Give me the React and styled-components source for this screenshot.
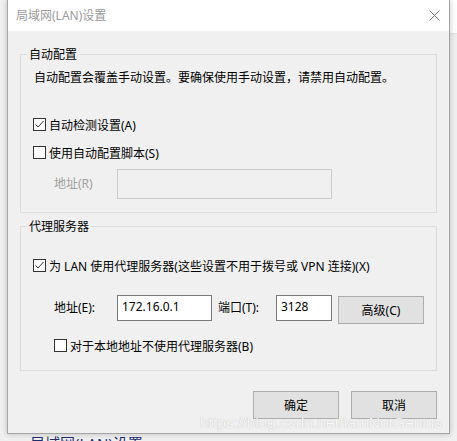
import React from 'react';
import styled, { createGlobalStyle } from 'styled-components';

const GlobalStyle = createGlobalStyle`
  html, body {
    margin: 0;
    padding: 0;
    background: #f0f0f0;
  }
  body {
    font-family: 'Noto Sans', 'Noto Sans CJK SC', sans-serif;
    font-size: 12px;
    color: #000000;
  }
`;

const Page = styled.div`
  position: relative;
  width: 457px;
  height: 441px;
  overflow: hidden;
  padding-left: 7px;
  box-sizing: border-box;
  background: linear-gradient(#ffffff, #ffffff) right top / 8px 33px no-repeat,
    linear-gradient(#e3e3e3, #e3e3e3) right 33px / 8px 1px no-repeat, #f0f0f0;
`;

const Dialog = styled.div`
  width: 443px;
  box-sizing: border-box;
  border: 1px solid #a5a5a5;
  border-top: none;
  background: #f0f0f0;
  box-shadow: 0 0 6px rgba(0, 0, 0, 0.22);
`;

const TitleBar = styled.div`
  height: 31px;
  background: #ffffff;
  display: flex;
  align-items: center;
  justify-content: space-between;
  padding: 0 9px 0 8px;
`;

const Title = styled.div`
  color: #9a9a9a;
  font-size: 12px;
  line-height: 16px;
`;

const Body = styled.div`
  padding: 23px 12px 14px 12px;
  display: flex;
  flex-direction: column;
`;

const Group = styled.div`
  position: relative;
  border: 1px solid #dcdcdc;
  padding: ${(p) => p.$pad};
  margin-bottom: ${(p) => p.$mb || 0}px;
  display: flex;
  flex-direction: column;
`;

const Legend = styled.div`
  position: absolute;
  top: -8px;
  left: 6px;
  padding: 0 2px;
  line-height: 16px;
  background: #f0f0f0;
`;

const Desc = styled.div`
  line-height: 16px;
  margin-left: 1px;
`;

const CheckRow = styled.label`
  display: flex;
  align-items: center;
  height: 17px;
  gap: 3px;
  margin-top: ${(p) => p.$mt || 0}px;
  margin-left: ${(p) => p.$indent || 0}px;
`;

const Box = styled.span`
  width: 13px;
  height: 13px;
  box-sizing: border-box;
  border: 1px solid #333333;
  background: #ffffff;
  display: flex;
  align-items: center;
  justify-content: center;
`;

const FieldRow = styled.div`
  display: flex;
  align-items: flex-start;
  padding-left: 21px;
  margin-top: ${(p) => p.$mt || 0}px;
`;

const FieldLabel = styled.div`
  width: ${(p) => p.$w}px;
  flex-shrink: 0;
  color: ${(p) => (p.$disabled ? '#a0a0a0' : '#000000')};
  line-height: ${(p) => p.$lh}px;
  margin-left: ${(p) => p.$ml || 0}px;
`;

const Input = styled.div`
  width: ${(p) => p.$w}px;
  height: ${(p) => p.$h}px;
  box-sizing: border-box;
  border: 1px solid ${(p) => (p.$disabled ? '#cccccc' : '#7a7a7a')};
  background: ${(p) => (p.$disabled ? '#f0f0f0' : '#ffffff')};
  padding-left: 4px;
  line-height: 22px;
  font-size: 12px;
`;

const Button = styled.button`
  width: 86px;
  height: 28px;
  box-sizing: border-box;
  border: 1px solid #adadad;
  background: #e1e1e1;
  font-family: 'Noto Sans', 'Noto Sans CJK SC', sans-serif;
  font-size: 12px;
  color: #000000;
  padding: 0;
  margin-left: ${(p) => p.$ml || 0}px;
  margin-top: ${(p) => p.$mt || 0}px;
`;

const Footer = styled.div`
  display: flex;
  justify-content: flex-end;
  gap: 12px;
  margin-top: 20px;
`;

const BackTitle = styled.div`
  margin-left: 23px;
  font-size: 15px;
  line-height: 18px;
  color: #1d2d6e;
`;

const Watermark = styled.div`
  position: absolute;
  left: 200px;
  top: 415px;
  font-family: 'Liberation Sans', Arial, sans-serif;
  font-size: 15.5px;
  line-height: 15px;
  color: rgba(255, 255, 255, 0.9);
  text-shadow: 0 0 1px rgba(90, 90, 90, 0.45);
  white-space: nowrap;
`;

const Check = () => (
  <svg width="11" height="11" viewBox="0 0 11 11">
    <path d="M1.5 5.5 L4 8 L9.5 2" fill="none" stroke="#333" strokeWidth="1" />
  </svg>
);

const Checkbox = ({ checked, children, ...rest }) => (
  <CheckRow {...rest}>
    <Box>{checked && <Check />}</Box>
    <span>{children}</span>
  </CheckRow>
);

const CloseIcon = () => (
  <svg width="11" height="11" viewBox="0 0 11 11">
    <path d="M0.5 0.5 L10.5 10.5 M10.5 0.5 L0.5 10.5" stroke="#7a7a7a" strokeWidth="1" />
  </svg>
);

const App = () => {
  return (
    <Page>
      <GlobalStyle />
      <Dialog>
        <TitleBar>
          <Title>局域网(LAN)设置</Title>
          <CloseIcon />
        </TitleBar>
        <Body>
          <Group $pad="15px 12px 13px 12px" $mb={13}>
            <Legend>自动配置</Legend>
            <Desc>自动配置会覆盖手动设置。要确保使用手动设置，请禁用自动配置。</Desc>
            <Checkbox checked $mt={30}>自动检测设置(A)</Checkbox>
            <Checkbox $mt={11}>使用自动配置脚本(S)</Checkbox>
            <FieldRow $mt={8}>
              <FieldLabel $w={63} $lh={30} $disabled>地址(R)</FieldLabel>
              <Input $w={215} $h={30} $disabled />
            </FieldRow>
          </Group>
          <Group $pad="30px 12px 16px 12px">
            <Legend>代理服务器</Legend>
            <Checkbox checked>为 LAN 使用代理服务器(这些设置不用于拨号或 VPN 连接)(X)</Checkbox>
            <FieldRow $mt={21}>
              <FieldLabel $w={63} $lh={26}>地址(E):</FieldLabel>
              <Input $w={95} $h={26}>172.16.0.1</Input>
              <FieldLabel $w={58} $lh={26} $ml={6}>端口(T):</FieldLabel>
              <Input $w={56} $h={26}>3128</Input>
              <Button $ml={6} $mt={1}>高级(C)</Button>
            </FieldRow>
            <Checkbox $mt={13} $indent={21}>对于本地地址不使用代理服务器(B)</Checkbox>
          </Group>
          <Footer>
            <Button>确定</Button>
            <Button>取消</Button>
          </Footer>
        </Body>
      </Dialog>
      <BackTitle>局域网(LAN)设置</BackTitle>
      <Watermark>https://blog.csdn.net/IamNotGenius</Watermark>
    </Page>
  );
};

export default App;
